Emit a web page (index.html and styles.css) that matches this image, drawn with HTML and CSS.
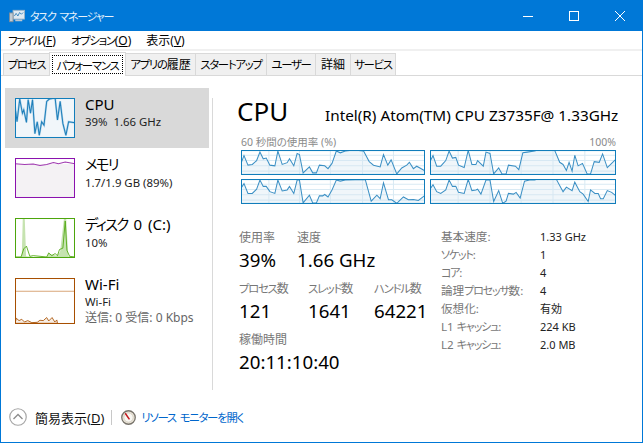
FILE: index.html
```html
<!DOCTYPE html>
<html lang="ja">
<head>
<meta charset="utf-8">
<title>タスク マネージャー</title>
<link rel="stylesheet" href="styles.css">
</head>
<body>
<div class="window">
  <header class="titlebar">
    <svg class="app-icon" width="16" height="14" viewBox="0 0 18 16">
      <rect x="4.5" y="1.5" width="13" height="10" fill="#dfe9f2" stroke="#9fb3c4"/>
      <polyline points="6,8 8,5 10,8 12,4 14,6 16,4" fill="none" stroke="#2f7fb8"/>
      <rect x="0.5" y="4.5" width="4" height="10" fill="#c3ccd4" stroke="#7f8d99"/>
      <rect x="7" y="12" width="8" height="2" fill="#b9c6d1"/>
    </svg>
    <span class="title-text k">タスク マネージャー</span>
    <div class="win-buttons">
      <span class="win-btn"><svg width="12" height="12" viewBox="0 0 12 12"><line x1="1" y1="6.5" x2="11" y2="6.5" stroke="#fff"/></svg></span>
      <span class="win-btn"><svg width="12" height="12" viewBox="0 0 12 12"><rect x="1.5" y="1.5" width="9" height="9" fill="none" stroke="#fff"/></svg></span>
      <span class="win-btn"><svg width="12" height="12" viewBox="0 0 12 12"><path d="M1 1L11 11M11 1L1 11" stroke="#fff" fill="none"/></svg></span>
    </div>
  </header>
  <nav class="menubar">
    <span class="menu-item"><span class="k">ファイル</span>(<u>F</u>)</span>
    <span class="menu-item"><span class="k">オプション</span>(<u>O</u>)</span>
    <span class="menu-item">表示(<u>V</u>)</span>
  </nav>
  <div class="tabs">
    <span class="tab t1"><span class="k">プロセス</span></span>
    <span class="tab active t2"><span class="focus"><span class="k">パフォーマンス</span></span></span>
    <span class="tab t3"><span class="k">アプリの</span>履歴</span>
    <span class="tab t4"><span class="k">スタートアップ</span></span>
    <span class="tab t5"><span class="k">ユーザー</span></span>
    <span class="tab t6">詳細</span>
    <span class="tab t7"><span class="k">サービス</span></span>
  </div>
  <div class="content">
    <aside class="sidebar">
      <div class="list">
        <div class="item selected">
          <svg class="thumb" width="60" height="40" viewBox="46 25 178 118" preserveAspectRatio="none">
            <rect x="46" y="25" width="178" height="118" fill="#f1f6fa"/>
            <polyline points="46,50 52,95 60,28 68,70 72,60 80,97 85,30 92,70 98,30 105,130 112,95 118,135 125,95 132,105 140,35 148,28 165,25 172,90 180,35 188,100 197,135 205,95 224,98" fill="none" stroke="#a9d0e8" stroke-width="6"/>
            <polyline points="46,50 52,95 60,28 68,70 72,60 80,97 85,30 92,70 98,30 105,130 112,95 118,135 125,95 132,105 140,35 148,28 165,25 172,90 180,35 188,100 197,135 205,95 224,98" fill="none" stroke="#1f7fba" stroke-width="3"/>
            <rect x="47.5" y="26.5" width="175" height="115" fill="none" stroke="#117dbb" stroke-width="3"/>
          </svg>
          <div class="info"><div class="name">CPU</div><div class="sub">39%&nbsp; 1.66 GHz</div></div>
        </div>
        <div class="item">
          <svg class="thumb" width="60" height="40" viewBox="46 25 178 118" preserveAspectRatio="none">
            <rect x="46" y="25" width="178" height="118" fill="#f4f2f4"/>
            <rect x="46" y="25" width="178" height="18" fill="#fff"/>
            <polyline points="46,42 75,44 100,43 120,47 140,44 160,38 175,42 195,37 224,42" fill="none" stroke="#a03ab0" stroke-width="3"/>
            <rect x="47.5" y="26.5" width="175" height="115" fill="none" stroke="#8b12ae" stroke-width="3"/>
          </svg>
          <div class="info"><div class="name"><span class="k">メモリ</span></div><div class="sub">1.7/1.9 GB (89%)</div></div>
        </div>
        <div class="item">
          <svg class="thumb" width="60" height="40" viewBox="46 205 178 118" preserveAspectRatio="none">
            <rect x="46" y="205" width="178" height="118" fill="#fff"/>
            <polygon points="46,322 66,320 69,208 75,208 79,318 100,320 140,320 146,310 170,316 180,304 191,208 198,208 204,318 224,320 224,322" fill="#c6e3b0"/>
            <polyline points="46,320 64,320 72,296 80,288 90,318 100,316 140,320 146,308 155,316 165,310 172,316 178,298 188,294 195,214 200,300 208,318 224,320" fill="none" stroke="#4da60c" stroke-width="2.5"/>
            <rect x="47.5" y="206.5" width="175" height="115" fill="none" stroke="#4da60c" stroke-width="3"/>
          </svg>
          <div class="info"><div class="name"><span class="k">ディスク</span> 0 (C:)</div><div class="sub">10%</div></div>
        </div>
        <div class="item wifi">
          <svg class="thumb" width="60" height="46" viewBox="46 385 178 136" preserveAspectRatio="none">
            <rect x="46" y="385" width="178" height="136" fill="#fff"/>
            <line x1="46" y1="424.5" x2="224" y2="424.5" stroke="#d9a679" stroke-width="3"/>
            <polygon points="46,519 50,504 58,511 66,507 74,515 84,511 96,517 112,516 120,510 130,511 140,502 146,512 156,502 164,515 170,509 172,519" fill="#f8eee4" stroke="#a74f01" stroke-width="2.5"/>
            <rect x="47.5" y="386.5" width="175" height="133" fill="none" stroke="#a74f01" stroke-width="3"/>
          </svg>
          <div class="info"><div class="name">Wi-Fi</div><div class="sub">Wi-Fi</div><div class="sub muted">送信: 0 受信: 0 Kbps</div></div>
        </div>
      </div>
      <div class="divider"></div>
    </aside>
    <main class="main">
      <div class="heading"><h1>CPU</h1><span class="model">Intel(R) Atom(TM) CPU Z3735F@ 1.33GHz</span></div>
      <div class="graph-caption"><span>60 秒間の使用率 (%)</span><span>100%</span></div>
      <div class="graphs">
        <svg class="core" width="184" height="25" viewBox="16 62 554 71" preserveAspectRatio="none">
          <use href="#grid1"/>
          <polygon points="16,133 16,100 25,78 37,105 50,103 63,92 73,68 83,87 92,85 103,105 118,107 127,65 140,103 155,98 162,87 175,107 185,72 192,75 203,127 222,110 232,127 243,127 252,105 268,107 278,115 290,100 303,65 315,70 330,65 355,62 385,65 402,95 415,105 435,110 445,75 458,105 468,90 485,130 500,113 515,105 523,97 535,115 545,108 568,120 570,133" fill="#d4e6f2" fill-opacity=".35"/>
          <polyline points="16,100 25,78 37,105 50,103 63,92 73,68 83,87 92,85 103,105 118,107 127,65 140,103 155,98 162,87 175,107 185,72 192,75 203,127 222,110 232,127 243,127 252,105 268,107 278,115 290,100 303,65 315,70 330,65 355,62 385,65 402,95 415,105 435,110 445,75 458,105 468,90 485,130 500,113 515,105 523,97 535,115 545,108 568,120" fill="none" stroke="#3a8fc4" stroke-width="3"/>
          <rect x="17.5" y="63.5" width="551" height="68" fill="none" stroke="#117dbb" stroke-width="3"/>
        </svg>
        <svg class="core" width="186" height="25" viewBox="13 62 555 71" preserveAspectRatio="none">
          <use href="#grid2"/>
          <polygon points="13,133 13,95 22,78 33,108 45,108 60,92 70,65 80,85 90,83 98,105 115,112 127,63 138,103 150,103 155,92 172,108 180,68 192,72 203,130 218,113 228,130 240,130 247,105 268,108 278,118 290,70 303,68 325,65 335,62 385,63 400,97 410,103 420,120 428,97 437,122 445,77 455,107 468,100 482,130 492,130 503,95 518,97 528,73 542,112 555,100 568,88 568,133" fill="#d4e6f2" fill-opacity=".35"/>
          <polyline points="13,95 22,78 33,108 45,108 60,92 70,65 80,85 90,83 98,105 115,112 127,63 138,103 150,103 155,92 172,108 180,68 192,72 203,130 218,113 228,130 240,130 247,105 268,108 278,118 290,70 303,68 325,65 335,62 385,63 400,97 410,103 420,120 428,97 437,122 445,77 455,107 468,100 482,130 492,130 503,95 518,97 528,73 542,112 555,100 568,88" fill="none" stroke="#3a8fc4" stroke-width="3"/>
          <rect x="14.5" y="63.5" width="552" height="68" fill="none" stroke="#117dbb" stroke-width="3"/>
        </svg>
        <svg class="core" width="184" height="25" viewBox="16 149 554 71" preserveAspectRatio="none">
          <use href="#grid3"/>
          <polygon points="16,220 16,175 25,162 37,190 50,190 63,178 73,152 83,170 92,170 103,185 118,190 127,152 140,183 155,180 162,170 175,190 185,152 192,152 203,217 222,195 232,217 243,217 252,197 262,197 268,193 278,200 290,180 303,152 315,155 330,152 390,150 408,212 425,195 435,205 445,160 460,208 470,208 485,218 505,200 520,208 535,207 550,210 568,197 570,220" fill="#d4e6f2" fill-opacity=".35"/>
          <polyline points="16,175 25,162 37,190 50,190 63,178 73,152 83,170 92,170 103,185 118,190 127,152 140,183 155,180 162,170 175,190 185,152 192,152 203,217 222,195 232,217 243,217 252,197 262,197 268,193 278,200 290,180 303,152 315,155 330,152 390,150 408,212 425,195 435,205 445,160 460,208 470,208 485,218 505,200 520,208 535,207 550,210 568,197" fill="none" stroke="#3a8fc4" stroke-width="3"/>
          <rect x="17.5" y="150.5" width="551" height="68" fill="none" stroke="#117dbb" stroke-width="3"/>
        </svg>
        <svg class="core" width="186" height="25" viewBox="13 149 555 71" preserveAspectRatio="none">
          <use href="#grid4"/>
          <polygon points="13,220 13,178 22,165 33,185 45,190 60,180 70,152 80,170 90,170 98,187 115,190 127,150 138,182 150,180 155,178 165,192 180,152 192,152 203,213 218,182 230,218 240,212 247,190 262,192 270,187 282,203 295,155 310,152 325,152 335,149 390,150 410,185 420,172 437,182 445,158 460,185 470,192 485,213 492,180 505,190 515,190 522,205 530,205 542,182 555,187 568,197 568,220" fill="#d4e6f2" fill-opacity=".35"/>
          <polyline points="13,178 22,165 33,185 45,190 60,180 70,152 80,170 90,170 98,187 115,190 127,150 138,182 150,180 155,178 165,192 180,152 192,152 203,213 218,182 230,218 240,212 247,190 262,192 270,187 282,203 295,155 310,152 325,152 335,149 390,150 410,185 420,172 437,182 445,158 460,185 470,192 485,213 492,180 505,190 515,190 522,205 530,205 542,182 555,187 568,197" fill="none" stroke="#3a8fc4" stroke-width="3"/>
          <rect x="14.5" y="150.5" width="552" height="68" fill="none" stroke="#117dbb" stroke-width="3"/>
        </svg>
      </div>
      <svg class="defs" width="0" height="0">
        <defs>
          <g id="grid1" stroke="#d9eaf4" stroke-width="3" fill="none">
            <rect x="16" y="62" width="554" height="71" fill="#fff" stroke="none"/>
            <path d="M16 77H570M16 92H570M16 107H570M16 122H570M100 62V133M192 62V133M285 62V133M382 62V133M475 62V133"/>
          </g>
          <g id="grid2" stroke="#d9eaf4" stroke-width="3" fill="none">
            <rect x="13" y="62" width="555" height="71" fill="#fff" stroke="none"/>
            <path d="M13 77H568M13 92H568M13 107H568M13 122H568M97 62V133M192 62V133M285 62V133M380 62V133M475 62V133"/>
          </g>
          <g id="grid3" stroke="#d9eaf4" stroke-width="3" fill="none">
            <rect x="16" y="149" width="554" height="71" fill="#fff" stroke="none"/>
            <path d="M16 164H570M16 179H570M16 194H570M16 209H570M100 149V220M192 149V220M285 149V220M382 149V220M475 149V220"/>
          </g>
          <g id="grid4" stroke="#d9eaf4" stroke-width="3" fill="none">
            <rect x="13" y="149" width="555" height="71" fill="#fff" stroke="none"/>
            <path d="M13 164H568M13 179H568M13 194H568M13 209H568M97 149V220M192 149V220M285 149V220M380 149V220M475 149V220"/>
          </g>
        </defs>
      </svg>
      <div class="stats">
        <div class="left-stats">
          <div class="stat-row">
            <div class="stat w58"><div class="label">使用率</div><div class="value">39%</div></div>
            <div class="stat"><div class="label">速度</div><div class="value">1.66 GHz</div></div>
          </div>
          <div class="stat-row">
            <div class="stat w69"><div class="label"><span class="k">プロセス</span>数</div><div class="value">121</div></div>
            <div class="stat w66"><div class="label"><span class="k">スレッド</span>数</div><div class="value">1641</div></div>
            <div class="stat"><div class="label"><span class="k">ハンドル</span>数</div><div class="value">64221</div></div>
          </div>
          <div class="stat-row">
            <div class="stat"><div class="label">稼働時間</div><div class="value">20:11:10:40</div></div>
          </div>
        </div>
        <dl class="details">
          <dt>基本速度:</dt><dd>1.33 GHz</dd>
          <dt><span class="k">ソケット</span>:</dt><dd>1</dd>
          <dt><span class="k">コア</span>:</dt><dd>4</dd>
          <dt>論理<span class="k">プロセッサ</span>数:</dt><dd>4</dd>
          <dt>仮想化:</dt><dd>有効</dd>
          <dt>L1 <span class="k">キャッシュ</span>:</dt><dd>224 KB</dd>
          <dt>L2 <span class="k">キャッシュ</span>:</dt><dd>2.0 MB</dd>
        </dl>
      </div>
    </main>
  </div>
  <footer class="footer">
    <svg class="chevron" width="18" height="18" viewBox="0 0 18 18">
      <circle cx="9" cy="9" r="8.25" fill="#fff" stroke="#a6a6a6" stroke-width="1.2"/>
      <polyline points="4.5,11 9,6.5 13.5,11" fill="none" stroke="#8c8c8c" stroke-width="1.3"/>
    </svg>
    <span class="toggle">簡易表示(<u>D</u>)</span>
    <span class="sep"></span>
    <svg class="gauge" width="15" height="15" viewBox="0 0 16 16">
      <circle cx="8" cy="8" r="7.2" fill="#efe9dc" stroke="#77736b" stroke-width="1.4"/>
      <circle cx="8" cy="8" r="5" fill="#f9f7f2" stroke="#c9c3b5" stroke-width=".8"/>
      <line x1="4.5" y1="3.5" x2="9" y2="10" stroke="#c4161c" stroke-width="1.6"/>
    </svg>
    <span class="link k">リソース モニターを開く</span>
  </footer>
</div>
</body>
</html>
```
FILE: styles.css
```css
* { box-sizing: border-box; }
html, body { margin: 0; padding: 0; }
body {
  width: 643px; height: 443px; overflow: hidden; background: #fff;
  font-family: "Noto Sans", "Noto Sans CJK JP", sans-serif;
  font-feature-settings: "palt";
  color: #000;
}
.k { font-size: .95em; letter-spacing: -.11em; }
.window {
  width: 643px; height: 443px;
  display: flex; flex-direction: column;
  border: 1px solid #0078d7; border-top: 0;
}
.titlebar {
  height: 31px; flex: none;
  display: flex; align-items: center;
  background: #0078d7; color: #fff;
  padding-left: 8px; margin: 0 -1px;
}
.app-icon { margin-right: 5px; margin-left: 1px; }
.title-text { font-size: 11px; word-spacing: 2px; color: #e6f1fb; }
.win-buttons { margin-left: auto; display: flex; }
.win-btn { width: 46px; height: 31px; display: flex; align-items: center; justify-content: center; }
.menubar {
  height: 20px; flex: none;
  display: flex; align-items: center; gap: 15px;
  padding-left: 7px;
  border-bottom: 2px solid #f0f0f0;
  font-size: 12px;
}
.tabs {
  height: 25px; flex: none;
  padding: 2px 0 0 2px;
  display: flex;
  border-bottom: 1px solid #d9d9d9;
}
.tab {
  height: 22px;
  border: 1px solid #d9d9d9; border-left: 0; border-bottom: 0;
  background: #f0f0f0;
  font-size: 12px; line-height: 22px; text-align: center;
  white-space: nowrap;
}
.t1 { width: 47px; border-left: 1px solid #d9d9d9; }
.t2 { width: 77px; }
.t3 { width: 70px; }
.t4 { width: 71px; }
.t5 { width: 49px; }
.t6 { width: 35px; }
.t7 { width: 45px; }
.tab.active {
  background: #fff; height: 24px; margin-top: -1px;
  border-left: 1px solid #d9d9d9; margin-left: -1px;
  padding: 2px; position: relative; z-index: 1;
}
.focus { display: block; height: 19px; line-height: 19px; border: 1px dotted #000; }
.content { flex: 1; min-height: 0; display: flex; }
.sidebar { width: 213px; flex: none; display: flex; padding-left: 4px; }
.list { width: 204px; padding-top: 12px; }
.item { height: 60px; display: flex; padding: 10px 0 0 10px; }
.item.selected { background: #d9d9d9; }
.item.wifi { height: 66px; }
.thumb { flex: none; display: block; }
.info { margin-left: 10px; margin-top: -4px; }
.name { font-size: 15px; line-height: 20px; word-spacing: 2px; }
.sub { font-size: 11.4px; line-height: 16px; color: #222; }
.sub.muted { color: #666; font-size: 12px; }
.divider { width: 1px; margin: 22px 0 2px 3px; background: #d9d9d9; }
.main { flex: 1; padding: 18px 0 0 24px; min-width: 0; }
.heading { display: flex; align-items: baseline; height: 41px; }
h1 { margin: 0 0 0 -1px; width: 88px; flex: none; font-size: 26px; font-weight: 400; line-height: 34px; }
.model { font-size: 15.3px; white-space: nowrap; }
.graph-caption {
  margin: 0 0 0 3px; width: 375px; height: 14px;
  display: flex; justify-content: space-between;
  font-size: 10.5px; line-height: 14px; color: #8a8a8a;
}
.graphs {
  margin: 1px 0 0 3px;
  display: grid; grid-template-columns: 184px 186px; column-gap: 5px; row-gap: 4px;
}
.core { display: block; }
.defs { position: absolute; }
.stats { display: flex; margin-top: 26px; }
.left-stats { width: 203px; padding-left: 1px; }
.stat-row { display: flex; height: 51px; }
.stat { flex: none; }
.w58 { width: 58px; }
.w69 { width: 69px; }
.w66 { width: 66px; }
.label { font-size: 12px; line-height: 16px; color: #777; }
.value { font-size: 18.7px; line-height: 28px; white-space: nowrap; }
.details {
  margin: -2px 0 0; display: grid; grid-template-columns: 99px auto;
  grid-auto-rows: 18px; font-size: 11px; line-height: 18px;
}
.details dt { color: #777; white-space: nowrap; font-size: 11.6px; }
.details dd { margin: 0; color: #222; }
.footer {
  flex: none; height: 50px;
  display: flex; align-items: center;
  padding: 0 0 0 8px;
}
.toggle { font-size: 13px; margin-left: 8px; color: #111; }
.sep { width: 1px; height: 15px; background: #c8c8c8; margin: 0 9px 0 7px; }
.link { font-size: 11.4px; word-spacing: 2px; color: #0066cc; margin-left: 5px; }
```
